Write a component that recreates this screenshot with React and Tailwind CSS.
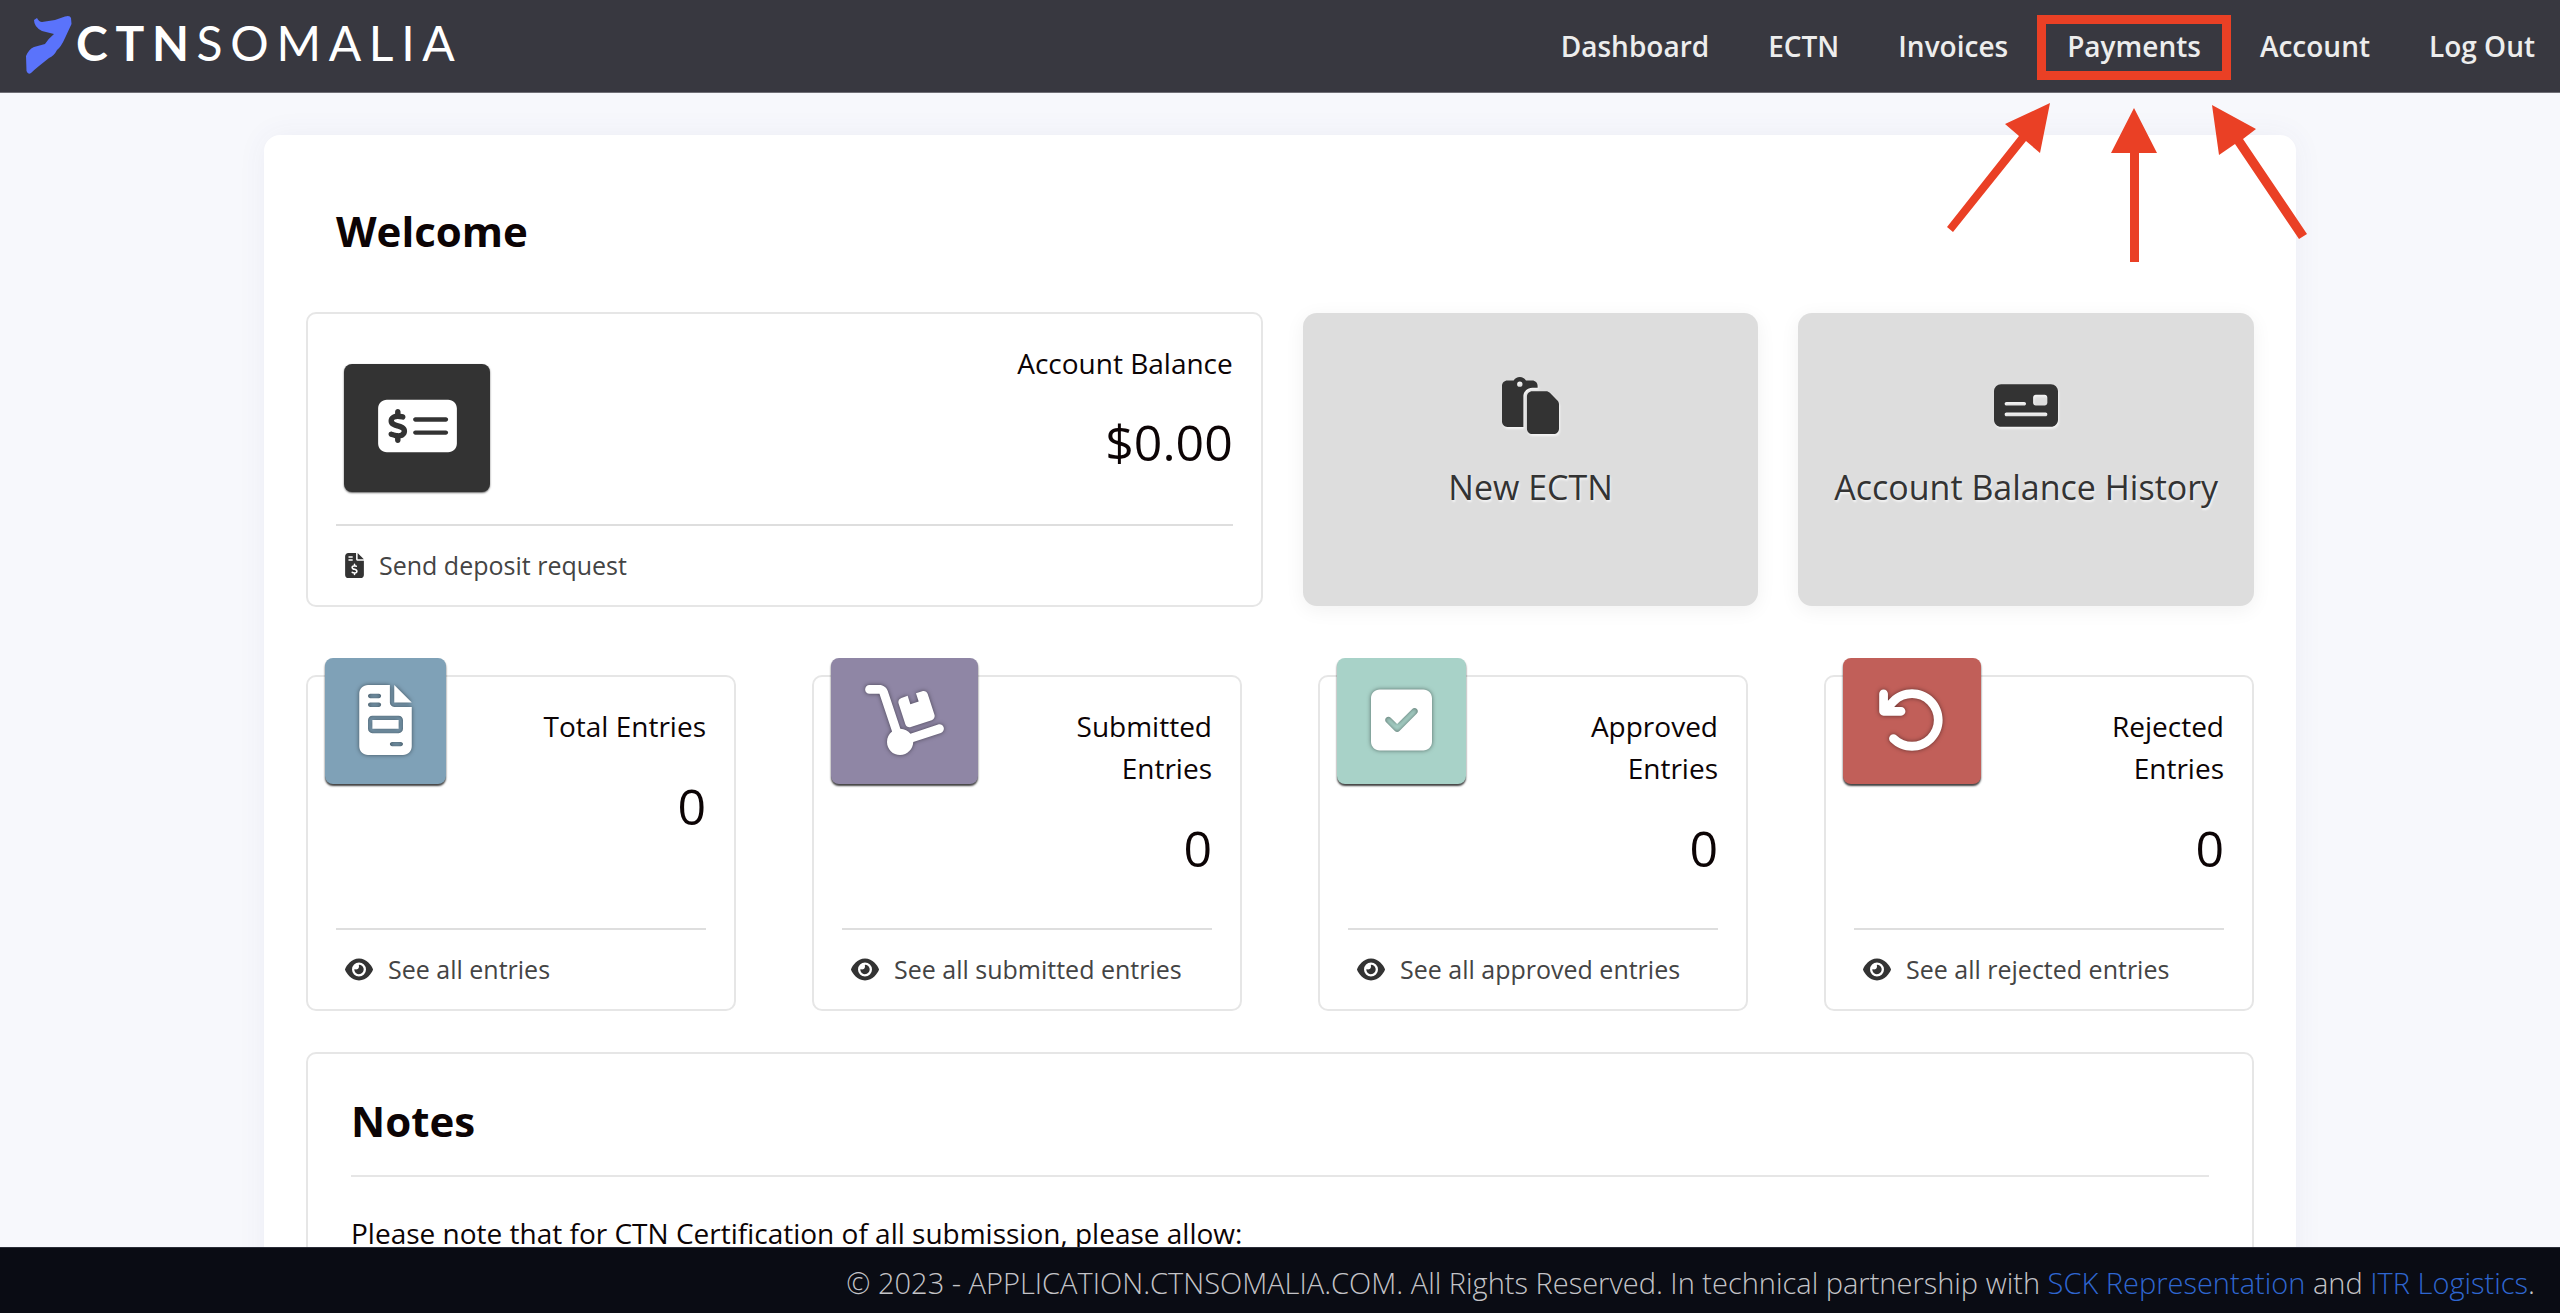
import {
  FaArrowRotateLeft,
  FaDolly,
  FaEye,
  FaFileInvoice,
  FaFileInvoiceDollar,
  FaMoneyCheck,
  FaMoneyCheckDollar,
  FaPaste,
  FaSquareCheck,
} from "react-icons/fa6";

const navLinks = ["Dashboard", "ECTN", "Invoices", "Payments", "Account", "Log Out"];

// Cards in the second row
const stats = [
  {
    label: "Total Entries",
    value: 0,
    link: "See all entries",
    icon: FaFileInvoice,
    iconWidth: "w-[53px]",
    color: "bg-[#7fa1b7]",
  },
  {
    label: "Submitted Entries",
    value: 0,
    link: "See all submitted entries",
    icon: FaDolly,
    iconWidth: "w-[79px]",
    color: "bg-[#8f86a5]",
  },
  {
    label: "Approved Entries",
    value: 0,
    link: "See all approved entries",
    icon: FaSquareCheck,
    iconWidth: "w-[61px]",
    color: "bg-[#a8d2c8]",
  },
  {
    label: "Rejected Entries",
    value: 0,
    link: "See all rejected entries",
    icon: FaArrowRotateLeft,
    iconWidth: "w-[70px]",
    color: "bg-[#c15f59]",
  },
];

const Logo = () => (
  <a href="#" className="flex items-start gap-1 pb-[6px]" aria-label="CTN Somalia">
    <svg viewBox="26 16 46 58" className="mt-1 h-[58px] w-[46px]" fill="#5a73fb">
      <path d="M34 20 L37 18 Q39 22 42 22 L55 20 L65 16.500 Q70 15 71 18 L71.500 24 L65 38 Q61 47 57 50 Q54 56 49 58 L39 66 Q34 70 31 73 Q28 75 26.500 71 L26 56 Q29 49 34 47 L45 44 Q48 39 54 34 L42 31 Q34 27 34 20 Z" />
    </svg>
    <span className="font-[Lato,sans-serif] text-[48px] leading-[62px] tracking-[0.16em] text-white">
      <span className="font-bold">CTN</span>
      <span>SOMALIA</span>
    </span>
  </a>
);

// Red frame and arrows that point at the Payments link
const PaymentsHighlight = () => (
  <>
    <span className="pointer-events-none absolute -inset-x-[30px] -top-[10px] -bottom-[13px] border-[9px] border-[#ea4025]" />
    <svg
      viewBox="1943 100 380 165"
      className="pointer-events-none absolute top-[75px] left-1/2 h-[165px] w-[380px] max-w-none -translate-x-1/2"
      fill="#ea4025"
    >
      <path d="M2049 103 L2004 124 L2018 136 L1946 227 L1952 232 L2025 141 L2039 153 Z" />
      <path d="M2133 108 L2110 153 L2129 153 L2129 262 L2138 262 L2138 153 L2156 153 Z" />
      <path d="M2211 105 L2218 155 L2234 144 L2298 239 L2306 234 L2242 139 L2255 129 Z" />
    </svg>
  </>
);

const Header = () => (
  <header className="relative z-20 flex h-[93px] shrink-0 items-center justify-between border-b border-[#6f6f76] bg-[#383840] pr-[25px] pl-[26px]">
    <Logo />
    <nav className="flex gap-[59px] text-[28px] leading-[42px] font-semibold text-[#ededed]">
      {navLinks.map((name) => (
        <a key={name} href="#" className="relative">
          {name}
          {name === "Payments" && <PaymentsHighlight />}
        </a>
      ))}
    </nav>
  </header>
);

const CardLink = ({ icon: Icon, iconWidth, children }) => (
  <a
    href="#"
    className="flex items-center gap-[15px] border-t-2 border-[#dedede] py-[20px] pl-[9px] text-[25px] leading-[39px] text-[#444]"
  >
    <Icon className={`h-[25px] text-[#333] ${iconWidth}`} />
    {children}
  </a>
);

const BalanceCard = () => (
  <section className="rounded-[10px] border-2 border-[#e6e6e6] px-[28px] pt-[28px]">
    <div className="flex h-[182px] justify-between">
      <div className="mt-[22px] ml-[8px] flex h-[128px] w-[146px] justify-center rounded-[8px] bg-[#333] pt-[27px] shadow-[0_1px_2px_rgba(0,0,0,0.6)]">
        <FaMoneyCheckDollar className="h-[70px] w-[79px] text-white" />
      </div>
      <div className="text-right">
        <h2 className="text-[28px] leading-[42px]">Account Balance</h2>
        <p className="mt-[21px] text-[50px] leading-[75px]">$0.00</p>
      </div>
    </div>
    <CardLink icon={FaFileInvoiceDollar} iconWidth="w-[19px]">
      Send deposit request
    </CardLink>
  </section>
);

const ActionCard = ({ icon: Icon, iconWidth, children }) => (
  <button
    type="button"
    className="my-px flex flex-col items-center rounded-[14px] bg-[#ddd] pt-[64px] text-[34px] leading-[51px] text-[#333] shadow-[0_4px_20px_rgba(0,0,0,0.06)] text-shadow-[1px_2px_2px_#f4f4f4]"
  >
    <Icon className={`mb-[28px] h-[57px] drop-shadow-[1px_2px_1px_#f4f4f4] ${iconWidth}`} />
    {children}
  </button>
);

const StatCard = ({ stat }) => {
  const Icon = stat.icon;
  return (
    <section className="relative rounded-[10px] border-2 border-[#e6e6e6] px-[28px] pt-[28px]">
      <div
        className={`absolute -top-[19px] left-[17px] flex h-[126px] rounded-[8px] px-[34px] pt-[27px] shadow-[0_2px_2px_rgba(0,0,0,0.75)] ${stat.color}`}
      >
        <Icon className={`h-[70px] text-white drop-shadow-[0_0_2px_rgba(0,0,0,0.5)] ${stat.iconWidth}`} />
      </div>
      <div className="ml-auto h-[223px] max-w-[180px] text-right">
        <h2 className="text-[28px] leading-[42px]">{stat.label}</h2>
        <p className="mt-[22px] text-[50px] leading-[75px]">{stat.value}</p>
      </div>
      <CardLink icon={FaEye} iconWidth="w-[28px]">
        {stat.link}
      </CardLink>
    </section>
  );
};

const App = () => {
  return (
    <div className="flex h-screen flex-col bg-[#f7f8fc] font-['Open_Sans',sans-serif] text-[#0c0405]">
      <Header />
      <main className="flex-1 overflow-y-auto pt-[42px] [scrollbar-width:none]">
        <div className="mx-auto max-w-[2032px] rounded-[16px] bg-white px-[42px] pt-[64px] pb-[42px] shadow-[0_0_30px_rgba(60,70,130,0.06)]">
          <h1 className="pl-[30px] text-[42px] leading-[63px] font-bold">Welcome</h1>

          <div className="mt-[50px] grid grid-cols-[21fr_10fr_10fr] gap-[40px]">
            <BalanceCard />
            <ActionCard icon={FaPaste} iconWidth="w-[57px]">
              New ECTN
            </ActionCard>
            <ActionCard icon={FaMoneyCheck} iconWidth="w-[64px]">
              Account Balance History
            </ActionCard>
          </div>

          {/* STATS */}
          <div className="mt-[68px] grid grid-cols-4 gap-[76px]">
            {stats.map((stat) => (
              <StatCard key={stat.label} stat={stat} />
            ))}
          </div>

          {/* NOTES */}
          <section className="mt-[41px] rounded-[10px] border-2 border-[#e6e6e6] px-[43px] pt-[35px] pb-[42px]">
            <h2 className="border-b-2 border-[#e6e6e6] pb-[23px] text-[42px] leading-[63px] font-bold">Notes</h2>
            <p className="mt-[35px] text-[28px] leading-[42px]">
              Please note that for CTN Certification of all submission, please allow:
            </p>
          </section>
        </div>
      </main>
      <footer className="z-10 h-[66px] shrink-0 border-t border-[#2a2d38] bg-[#0a0c14] pt-[14px] pr-[25px] text-right text-[29px] leading-[42px] font-light text-[#c4c4c8]">
        © 2023 - APPLICATION.CTNSOMALIA.COM. All Rights Reserved. In technical partnership with{" "}
        <a href="#" className="text-[#2f66d0]">SCK Representation</a> and{" "}
        <a href="#" className="text-[#2f66d0]">ITR Logistics</a>.
      </footer>
    </div>
  );
};

export default App;
